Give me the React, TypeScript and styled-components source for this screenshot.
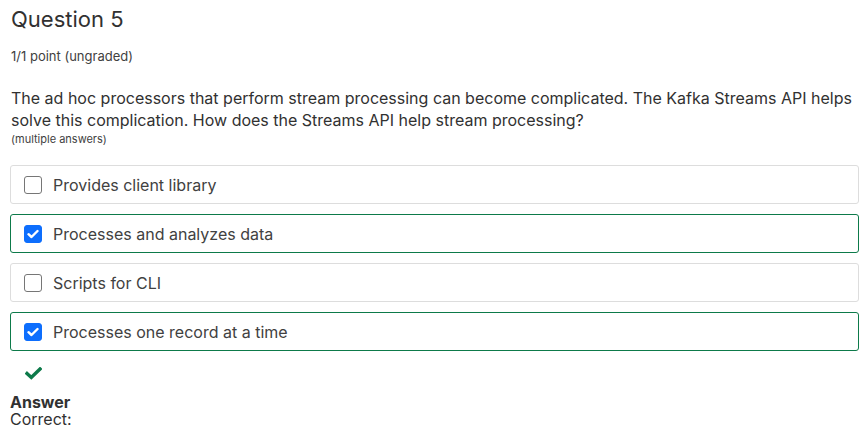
import React from "react";
import styled, { createGlobalStyle } from "styled-components";

const Global = createGlobalStyle`
  html, body { margin: 0; padding: 0; background: #fff; }
  body { font-family: Inter, "Noto Sans", sans-serif; color: #313131; }
`;

const Page = styled.div`
  padding: 4px 5px 0 10px;
  display: flex;
  flex-direction: column;
`;

const Title = styled.h2`
  margin: 0 0 0 1px;
  font-size: 22px;
  font-weight: 400;
  line-height: 30px;
  color: #313131;
`;

const Points = styled.div`
  margin: 14px 0 0 1px;
  font-size: 13px;
  line-height: 16px;
  color: #414141;
`;

const Prompt = styled.p`
  margin: 23px 0 0 1px;
  font-size: 16px;
  line-height: 22px;
  color: #313131;
`;

const Hint = styled.div`
  margin: 1px 0 0 1px;
  font-size: 11px;
  line-height: 15px;
  color: #414141;
`;

const Options = styled.div`
  margin-top: 18px;
  display: flex;
  flex-direction: column;
  gap: 10px;
`;

const Option = styled.label<{ $checked: boolean }>`
  display: flex;
  align-items: center;
  gap: 11px;
  height: 39px;
  box-sizing: border-box;
  padding: 0 13px;
  border: 1px solid ${(p) => (p.$checked ? "#0d7a4a" : "#dddddd")};
  border-radius: 3px;
  font-size: 16px;
  color: #414141;
`;

const Box = styled.span<{ $checked: boolean }>`
  width: 18px;
  height: 18px;
  box-sizing: border-box;
  border-radius: 3px;
  border: 1px solid ${(p) => (p.$checked ? "#0d6efd" : "#767676")};
  background: ${(p) => (p.$checked ? "#0d6efd" : "#fff")};
  display: flex;
  align-items: center;
  justify-content: center;
  flex: none;
`;

const Result = styled.div`
  margin: 16px 0 0 15px;
  height: 14px;
  display: flex;
`;

const AnswerLabel = styled.div`
  margin-top: 13px;
  font-size: 16px;
  font-weight: 700;
  line-height: 17px;
  color: #313131;
`;

const AnswerText = styled.div`
  font-size: 16px;
  line-height: 17px;
  color: #313131;
`;

const Tick = () => (
  <svg width="12" height="10" viewBox="0 0 12 10">
    <path d="M1.5 5.2 L4.5 8 L10.5 2" fill="none" stroke="#fff" strokeWidth="2.4" strokeLinecap="round" strokeLinejoin="round" />
  </svg>
);

const GreenCheck = () => (
  <svg width="17" height="13" viewBox="0 0 17 13">
    <path d="M2 6.5 L6.3 10.5 L15 2" fill="none" stroke="#0d7a4a" strokeWidth="3.4" strokeLinecap="square" strokeLinejoin="miter" />
  </svg>
);

const options = [
  { text: "Provides client library", checked: false },
  { text: "Processes and analyzes data", checked: true },
  { text: "Scripts for CLI", checked: false },
  { text: "Processes one record at a time", checked: true },
];

export default function App() {
  return (
    <>
      <Global />
      <Page>
        <Title>Question 5</Title>
        <Points>1/1 point (ungraded)</Points>
        <Prompt>
          The ad hoc processors that perform stream processing can become complicated. The Kafka Streams API helps
          solve this complication. How does the Streams API help stream processing?
        </Prompt>
        <Hint>(multiple answers)</Hint>
        <Options>
          {options.map((o) => (
            <Option key={o.text} $checked={o.checked}>
              <Box $checked={o.checked}>{o.checked && <Tick />}</Box>
              {o.text}
            </Option>
          ))}
        </Options>
        <Result>
          <GreenCheck />
        </Result>
        <AnswerLabel>Answer</AnswerLabel>
        <AnswerText>Correct:</AnswerText>
      </Page>
    </>
  );
}
